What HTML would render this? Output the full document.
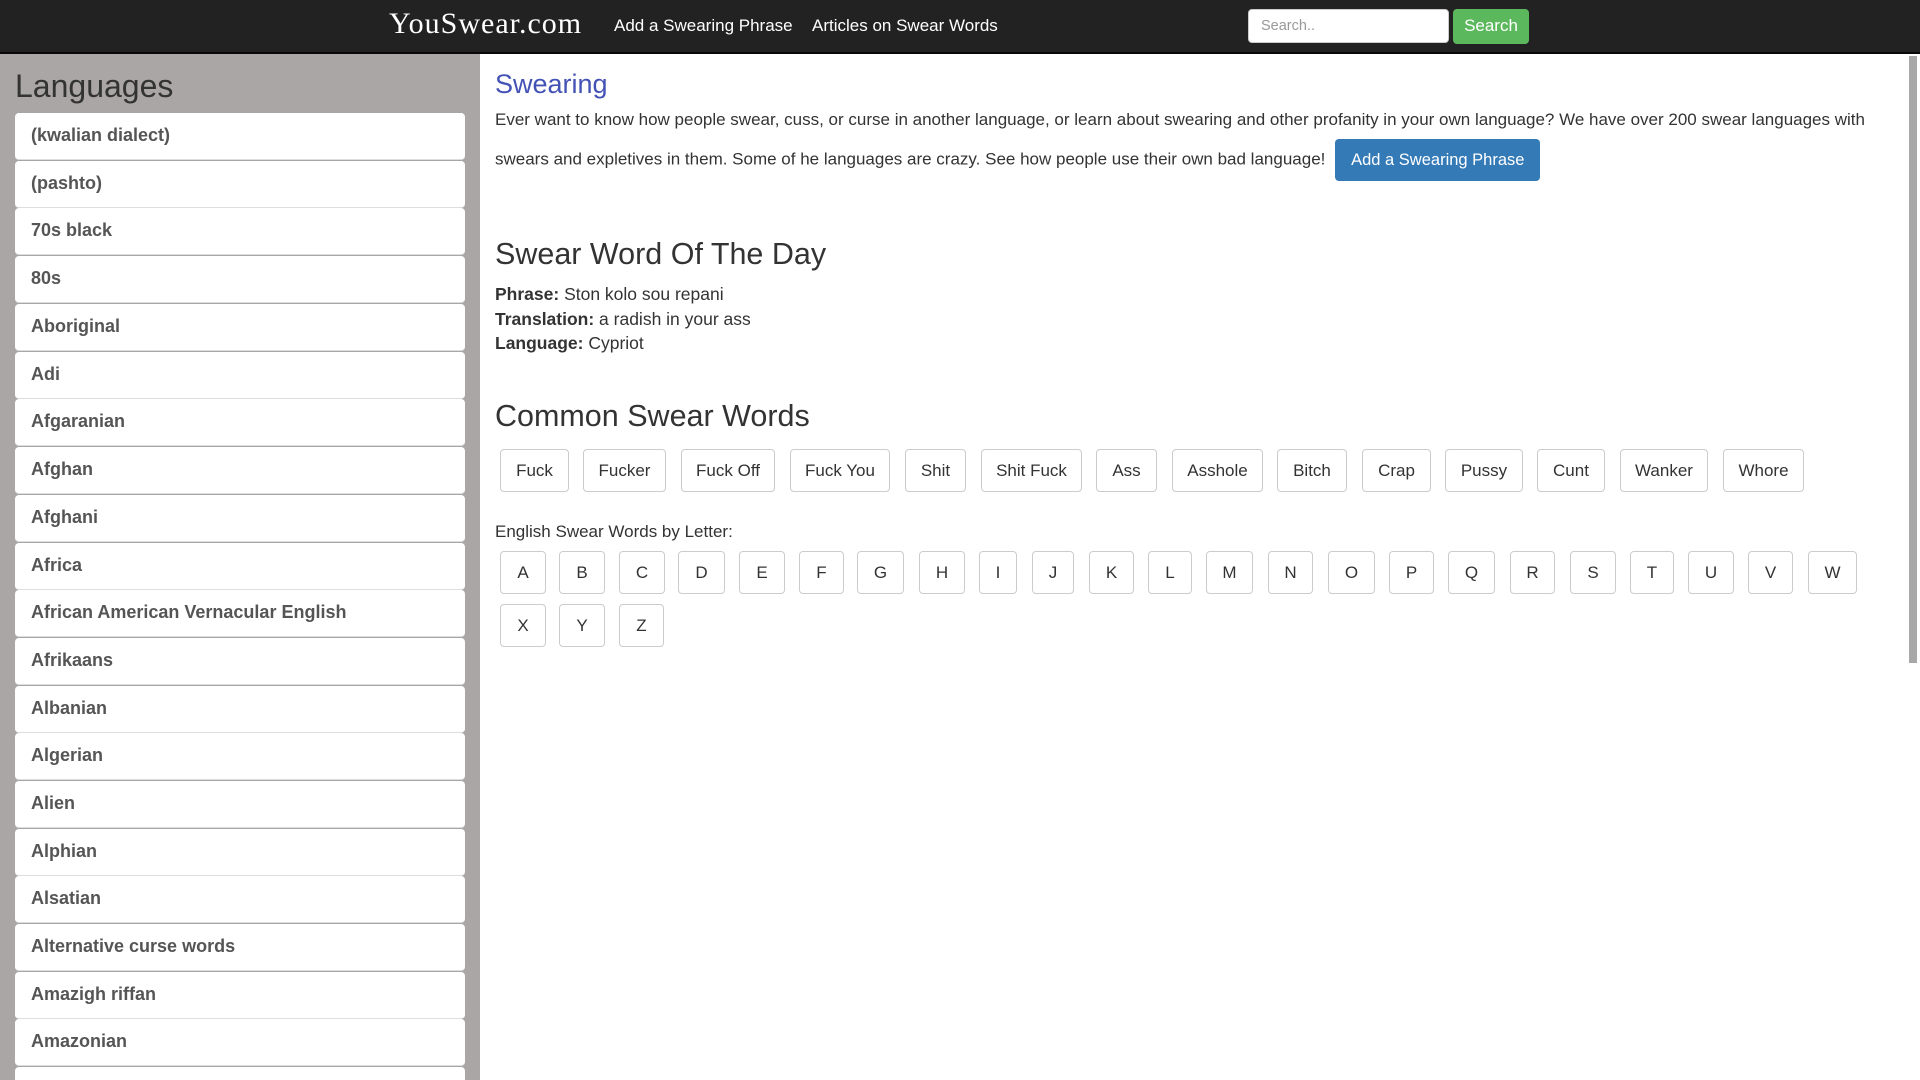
<!DOCTYPE html>
<html style="overflow:hidden;height:1080px"><head><meta charset="utf-8"><style>
*{box-sizing:border-box;margin:0;padding:0}
body{width:1920px;height:1080px;overflow:hidden;background:#fff;font-family:"Liberation Sans",Arial,sans-serif;color:#333;position:relative}
#nav{position:absolute;left:0;top:0;width:1920px;height:54px;background:#222;border-bottom:2px solid #080808}
#logo{position:absolute;left:389px;top:7px;color:#fff;font-family:"Liberation Serif",serif;font-size:30px;letter-spacing:1px}
.nl{position:absolute;top:16px;color:#fff;font-size:17px}
#sin{position:absolute;left:1248px;top:9px;width:201px;height:34px;background:#fff;border:1px solid #ccc;border-radius:4px;font-size:14.5px;color:#999;padding:8px 12px}
#sbtn{position:absolute;left:1453px;top:9px;width:76px;height:35px;background:#5cb85c;border-radius:4px;color:#fff;font-size:17px;text-align:center;line-height:34px}
#side{position:absolute;left:0;top:54px;width:480px;height:1026px;background:#aaa6a5}
#side h2{position:absolute;left:15px;top:14px;font-weight:normal;font-size:32px;color:#333}
.li{position:absolute;left:15px;width:450px;height:47px;background:#fff;border-radius:4px;border-bottom:1px solid #ddd;font-weight:bold;font-size:18px;color:#555;padding:12px 16px}
#sb{position:absolute;left:1906px;top:54px;width:14px;height:1026px;background:#fff}
#sb div{position:absolute;left:3px;top:2px;width:8px;height:607px;background:#a8a8a8}
.m{position:absolute;left:495px}
h1.t{font-weight:normal;font-size:27px;color:#4352b5;top:69px}
.p{font-size:17px;top:101px;width:1390px;line-height:38px}
.bb{display:inline-block;background:#337ab7;color:#fff;border-radius:4px;padding:0 16px;height:42px;line-height:42px;font-size:16.5px;margin-left:5px;vertical-align:middle;position:relative;top:0px}
.h{font-weight:normal;font-size:30.5px;color:#333}
.kv{font-size:17.5px;line-height:24.5px;top:282px}
.btn{position:absolute;height:43px;border:1px solid #ccc;border-radius:4px;font-size:17px;text-align:center;line-height:41px;color:#333;background:#fff}
</style></head><body>
<div id="nav">
<div id="logo">YouSwear.com</div>
<div class="nl" style="left:614px">Add a Swearing Phrase</div>
<div class="nl" style="left:812px">Articles on Swear Words</div>
<div id="sin">Search..</div>
<div id="sbtn">Search</div>
</div>
<div id="side"><h2>Languages</h2></div>
<div class="li" style="top:113px">(kwalian dialect)</div>
<div class="li" style="top:161px">(pashto)</div>
<div class="li" style="top:208px">70s black</div>
<div class="li" style="top:256px">80s</div>
<div class="li" style="top:304px">Aboriginal</div>
<div class="li" style="top:352px">Adi</div>
<div class="li" style="top:399px">Afgaranian</div>
<div class="li" style="top:447px">Afghan</div>
<div class="li" style="top:495px">Afghani</div>
<div class="li" style="top:543px">Africa</div>
<div class="li" style="top:590px">African American Vernacular English</div>
<div class="li" style="top:638px">Afrikaans</div>
<div class="li" style="top:686px">Albanian</div>
<div class="li" style="top:733px">Algerian</div>
<div class="li" style="top:781px">Alien</div>
<div class="li" style="top:829px">Alphian</div>
<div class="li" style="top:876px">Alsatian</div>
<div class="li" style="top:924px">Alternative curse words</div>
<div class="li" style="top:972px">Amazigh riffan</div>
<div class="li" style="top:1019px">Amazonian</div>
<div class="li" style="top:1067px;height:13px;border-bottom:0;border-radius:4px 4px 0 0"></div>

<h1 class="m t">Swearing</h1>
<div class="m p">Ever want to know how people swear, cuss, or curse in another language, or learn about swearing and other profanity in your own language? We have over 200 swear languages with swears and expletives in them. Some of he languages are crazy. See how people use their own bad language! <span class="bb">Add a Swearing Phrase</span></div>
<h2 class="m h" style="top:237px">Swear Word Of The Day</h2>
<div class="m kv"><b>Phrase:</b> Ston kolo sou repani<br><b>Translation:</b> a radish in your ass<br><b>Language:</b> Cypriot</div>
<h2 class="m h" style="top:399px">Common Swear Words</h2>
<div class="btn" style="left:500px;top:449px;width:69px">Fuck</div>
<div class="btn" style="left:583px;top:449px;width:83px">Fucker</div>
<div class="btn" style="left:681px;top:449px;width:94px">Fuck Off</div>
<div class="btn" style="left:790px;top:449px;width:100px">Fuck You</div>
<div class="btn" style="left:905px;top:449px;width:61px">Shit</div>
<div class="btn" style="left:981px;top:449px;width:101px">Shit Fuck</div>
<div class="btn" style="left:1096px;top:449px;width:61px">Ass</div>
<div class="btn" style="left:1172px;top:449px;width:91px">Asshole</div>
<div class="btn" style="left:1277px;top:449px;width:70px">Bitch</div>
<div class="btn" style="left:1362px;top:449px;width:69px">Crap</div>
<div class="btn" style="left:1445px;top:449px;width:78px">Pussy</div>
<div class="btn" style="left:1537px;top:449px;width:68px">Cunt</div>
<div class="btn" style="left:1620px;top:449px;width:88px">Wanker</div>
<div class="btn" style="left:1723px;top:449px;width:81px">Whore</div>
<div class="m" style="top:522px;font-size:17px">English Swear Words by Letter:</div>
<div class="btn" style="left:500px;top:551px;width:46px">A</div>
<div class="btn" style="left:559px;top:551px;width:46px">B</div>
<div class="btn" style="left:619px;top:551px;width:46px">C</div>
<div class="btn" style="left:678px;top:551px;width:47px">D</div>
<div class="btn" style="left:739px;top:551px;width:46px">E</div>
<div class="btn" style="left:799px;top:551px;width:45px">F</div>
<div class="btn" style="left:857px;top:551px;width:47px">G</div>
<div class="btn" style="left:919px;top:551px;width:46px">H</div>
<div class="btn" style="left:979px;top:551px;width:38px">I</div>
<div class="btn" style="left:1032px;top:551px;width:42px">J</div>
<div class="btn" style="left:1089px;top:551px;width:45px">K</div>
<div class="btn" style="left:1148px;top:551px;width:44px">L</div>
<div class="btn" style="left:1206px;top:551px;width:47px">M</div>
<div class="btn" style="left:1268px;top:551px;width:45px">N</div>
<div class="btn" style="left:1328px;top:551px;width:47px">O</div>
<div class="btn" style="left:1389px;top:551px;width:45px">P</div>
<div class="btn" style="left:1448px;top:551px;width:47px">Q</div>
<div class="btn" style="left:1510px;top:551px;width:45px">R</div>
<div class="btn" style="left:1570px;top:551px;width:46px">S</div>
<div class="btn" style="left:1630px;top:551px;width:44px">T</div>
<div class="btn" style="left:1688px;top:551px;width:46px">U</div>
<div class="btn" style="left:1748px;top:551px;width:45px">V</div>
<div class="btn" style="left:1808px;top:551px;width:49px">W</div>
<div class="btn" style="left:500px;top:604px;width:46px">X</div>
<div class="btn" style="left:559px;top:604px;width:46px">Y</div>
<div class="btn" style="left:619px;top:604px;width:45px">Z</div>
<div id="sb"><div></div></div>
</body></html>
